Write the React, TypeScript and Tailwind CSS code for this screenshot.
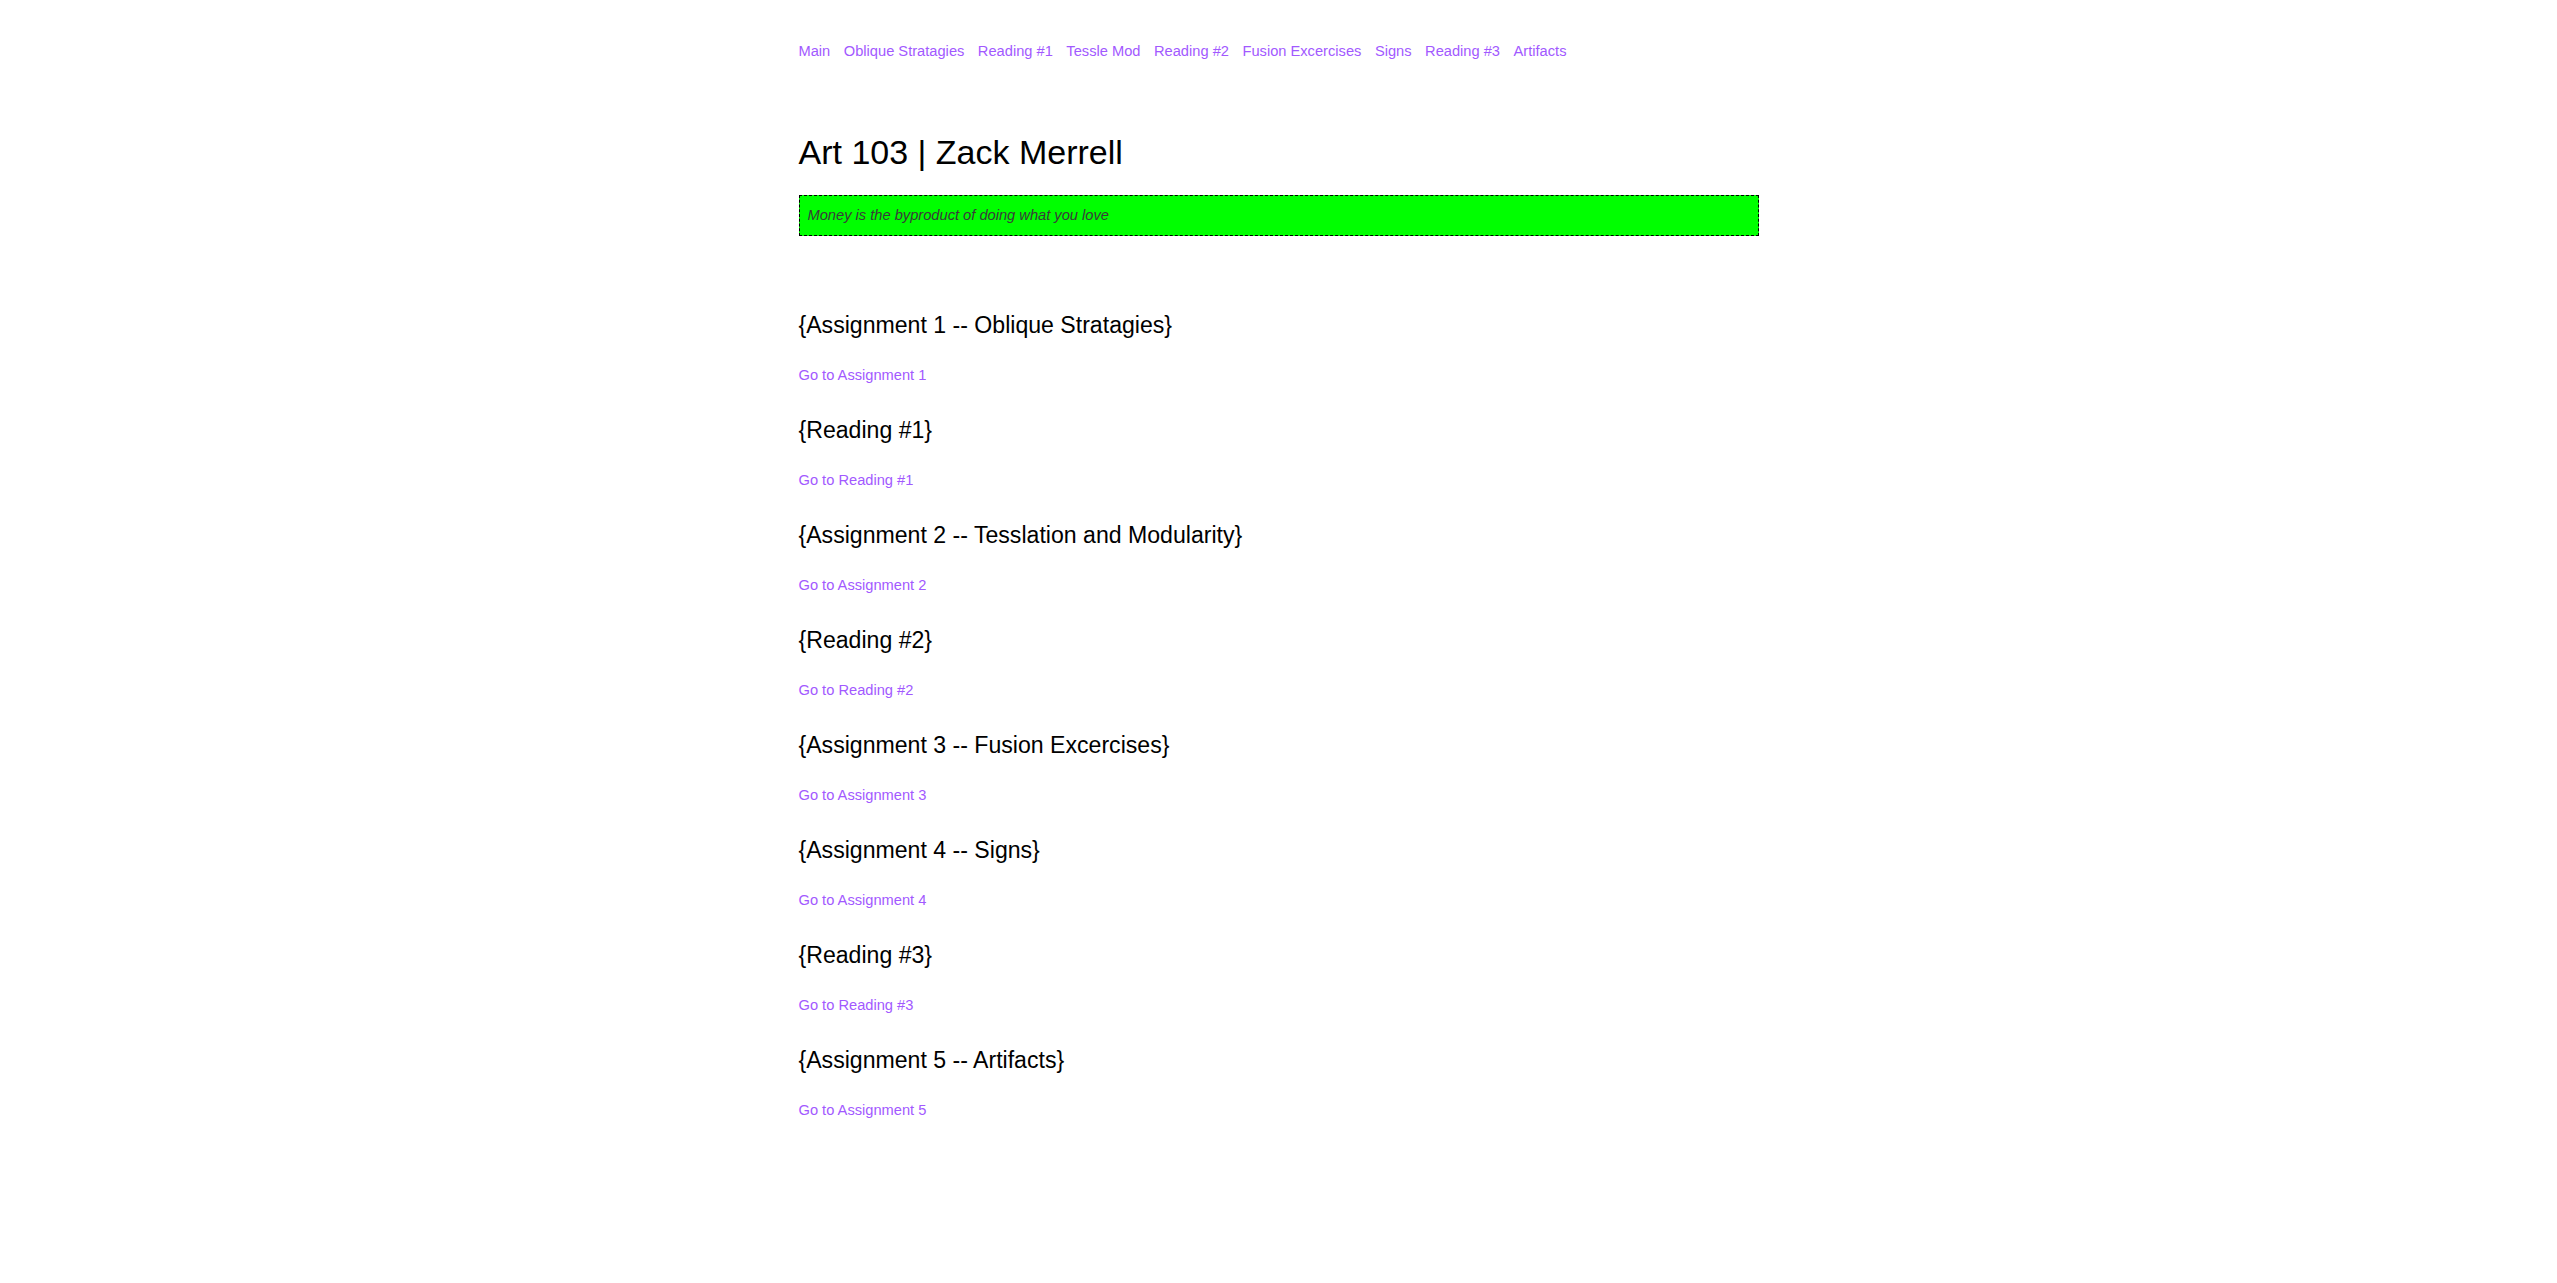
const navLinks = [
  'Main',
  'Oblique Stratagies',
  'Reading #1',
  'Tessle Mod',
  'Reading #2',
  'Fusion Excercises',
  'Signs',
  'Reading #3',
  'Artifacts',
];

const sections = [
  { title: '{Assignment 1 -- Oblique Stratagies}', link: 'Go to Assignment 1' },
  { title: '{Reading #1}', link: 'Go to Reading #1' },
  { title: '{Assignment 2 -- Tesslation and Modularity}', link: 'Go to Assignment 2' },
  { title: '{Reading #2}', link: 'Go to Reading #2' },
  { title: '{Assignment 3 -- Fusion Excercises}', link: 'Go to Assignment 3' },
  { title: '{Assignment 4 -- Signs}', link: 'Go to Assignment 4' },
  { title: '{Reading #3}', link: 'Go to Reading #3' },
  { title: '{Assignment 5 -- Artifacts}', link: 'Go to Assignment 5' },
];

export default function App() {
  return (
    <div className="min-h-screen bg-white font-['Liberation_Sans',Arial,sans-serif] text-black">
      <div className="w-[960px] mx-auto pt-[43px] pb-24">
        {/* Top nav */}
        <nav className="flex gap-x-[13.5px] text-[14.67px] leading-[17px]">
          {navLinks.map((item) => (
            <a key={item} href="#" className="text-[#a259ff]">
              {item}
            </a>
          ))}
        </nav>

        <h1 className="mt-[72px] text-[34px] leading-[40px] font-normal">
          Art 103 | Zack Merrell
        </h1>

        {/* Quote box */}
        <div className="mt-[23px] h-[41px] flex items-center px-2 border border-dashed border-black bg-[#00ff00]">
          <p className="italic text-[14.67px] leading-[17px] text-[#3a3a3a]">
            Money is the byproduct of doing what you love
          </p>
        </div>

        {/* Assignments */}
        <div className="mt-[76px]">
          {sections.map((s) => (
            <section key={s.title} className="mb-[33px]">
              <h2 className="text-[23.1px] leading-[27px] font-normal">
                {s.title}
              </h2>
              <a
                href="#"
                className="block mt-[28px] text-[14.67px] leading-[17px] text-[#a259ff]"
              >
                {s.link}
              </a>
            </section>
          ))}
        </div>
      </div>
    </div>
  );
}
